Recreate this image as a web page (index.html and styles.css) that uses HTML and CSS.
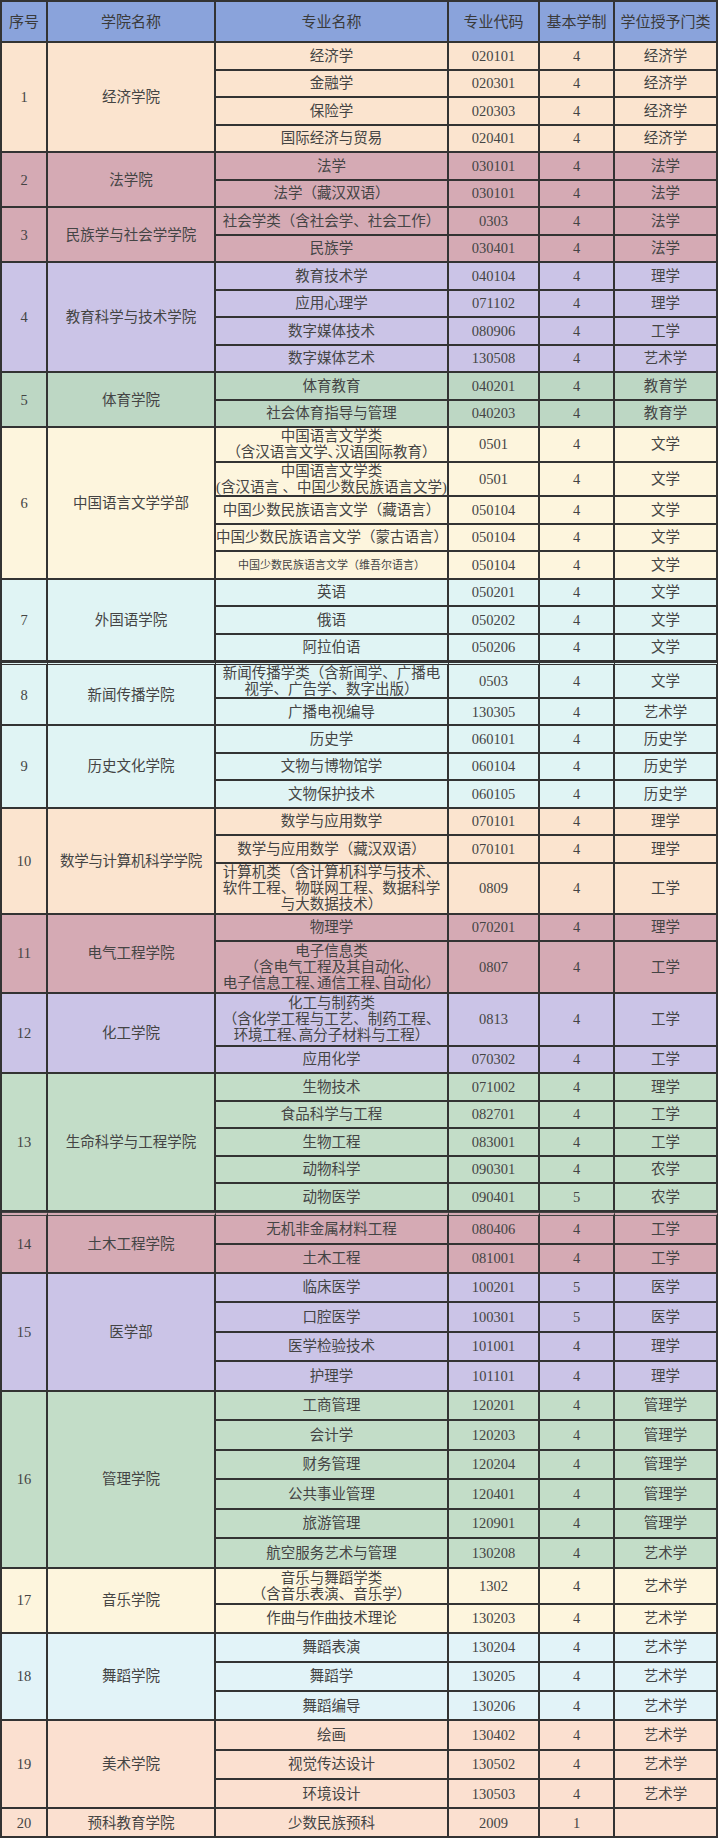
FILE: index.html
```html
<!DOCTYPE html>
<html lang="zh-CN">
<head>
<meta charset="utf-8">
<title>专业目录</title>
<link rel="stylesheet" href="styles.css">
</head>
<body>
<table class="majors">
  <colgroup>
    <col class="c-no"><col class="c-college"><col class="c-major"><col class="c-code"><col class="c-years"><col class="c-degree">
  </colgroup>
  <thead>
    <tr class="head">
      <th>序号</th><th>学院名称</th><th>专业名称</th><th>专业代码</th><th>基本学制</th><th>学位授予门类</th>
    </tr>
  </thead>
  <tbody class="peach">
    <tr class="r"><td rowspan="4">1</td><td rowspan="4">经济学院</td><td>经济学</td><td>020101</td><td>4</td><td>经济学</td></tr>
    <tr class="r"><td>金融学</td><td>020301</td><td>4</td><td>经济学</td></tr>
    <tr class="r"><td>保险学</td><td>020303</td><td>4</td><td>经济学</td></tr>
    <tr class="r"><td>国际经济与贸易</td><td>020401</td><td>4</td><td>经济学</td></tr>
  </tbody>
  <tbody class="pink">
    <tr class="r"><td rowspan="2">2</td><td rowspan="2">法学院</td><td>法学</td><td>030101</td><td>4</td><td>法学</td></tr>
    <tr class="r"><td>法学（藏汉双语）</td><td>030101</td><td>4</td><td>法学</td></tr>
    <tr class="r"><td rowspan="2">3</td><td rowspan="2">民族学与社会学学院</td><td>社会学类（含社会学、社会工作）</td><td>0303</td><td>4</td><td>法学</td></tr>
    <tr class="r"><td>民族学</td><td>030401</td><td>4</td><td>法学</td></tr>
  </tbody>
  <tbody class="lav">
    <tr class="r"><td rowspan="4">4</td><td rowspan="4">教育科学与技术学院</td><td>教育技术学</td><td>040104</td><td>4</td><td>理学</td></tr>
    <tr class="r"><td>应用心理学</td><td>071102</td><td>4</td><td>理学</td></tr>
    <tr class="r"><td>数字媒体技术</td><td>080906</td><td>4</td><td>工学</td></tr>
    <tr class="r"><td>数字媒体艺术</td><td>130508</td><td>4</td><td>艺术学</td></tr>
  </tbody>
  <tbody class="green1">
    <tr class="r"><td rowspan="2">5</td><td rowspan="2">体育学院</td><td>体育教育</td><td>040201</td><td>4</td><td>教育学</td></tr>
    <tr class="r"><td>社会体育指导与管理</td><td>040203</td><td>4</td><td>教育学</td></tr>
  </tbody>
  <tbody class="cream">
    <tr class="r2a"><td rowspan="5">6</td><td rowspan="5">中国语言文学学部</td><td class="ml">中国语言文学类<br>（含汉语言文学､汉语国际教育）</td><td>0501</td><td>4</td><td>文学</td></tr>
    <tr class="r2a"><td class="ml">中国语言文学类<br>(含汉语言 、中国少数民族语言文学)</td><td>0501</td><td>4</td><td>文学</td></tr>
    <tr class="r"><td>中国少数民族语言文学（藏语言）</td><td>050104</td><td>4</td><td>文学</td></tr>
    <tr class="r"><td>中国少数民族语言文学（蒙古语言）</td><td>050104</td><td>4</td><td>文学</td></tr>
    <tr class="r"><td class="small">中国少数民族语言文学（维吾尔语言）</td><td>050104</td><td>4</td><td>文学</td></tr>
  </tbody>
  <tbody class="cyan">
    <tr class="r"><td rowspan="3">7</td><td rowspan="3">外国语学院</td><td>英语</td><td>050201</td><td>4</td><td>文学</td></tr>
    <tr class="r"><td>俄语</td><td>050202</td><td>4</td><td>文学</td></tr>
    <tr class="r"><td>阿拉伯语</td><td>050206</td><td>4</td><td>文学</td></tr>
    <tr class="r2s sep"><td rowspan="2">8</td><td rowspan="2">新闻传播学院</td><td class="ml">新闻传播学类（含新闻学、广播电<br>视学、广告学、数字出版）</td><td>0503</td><td>4</td><td>文学</td></tr>
    <tr class="rs"><td>广播电视编导</td><td>130305</td><td>4</td><td>艺术学</td></tr>
    <tr class="r"><td rowspan="3">9</td><td rowspan="3">历史文化学院</td><td>历史学</td><td>060101</td><td>4</td><td>历史学</td></tr>
    <tr class="r"><td>文物与博物馆学</td><td>060104</td><td>4</td><td>历史学</td></tr>
    <tr class="r"><td>文物保护技术</td><td>060105</td><td>4</td><td>历史学</td></tr>
  </tbody>
  <tbody class="peach">
    <tr class="r"><td rowspan="3">10</td><td rowspan="3" class="tight">数学与计算机科学学院</td><td>数学与应用数学</td><td>070101</td><td>4</td><td>理学</td></tr>
    <tr class="r"><td>数学与应用数学（藏汉双语）</td><td>070101</td><td>4</td><td>理学</td></tr>
    <tr class="r3"><td class="ml">计算机类（含计算机科学与技术、<br>软件工程、物联网工程、数据科学<br>与大数据技术）</td><td>0809</td><td>4</td><td>工学</td></tr>
  </tbody>
  <tbody class="pink">
    <tr class="r"><td rowspan="2">11</td><td rowspan="2">电气工程学院</td><td>物理学</td><td>070201</td><td>4</td><td>理学</td></tr>
    <tr class="r3b"><td class="ml">电子信息类<br>（含电气工程及其自动化、<br>电子信息工程､通信工程､自动化）</td><td>0807</td><td>4</td><td>工学</td></tr>
  </tbody>
  <tbody class="lav">
    <tr class="r3c"><td rowspan="2">12</td><td rowspan="2">化工学院</td><td class="ml">化工与制药类<br>（含化学工程与工艺、制药工程、<br>环境工程､高分子材料与工程）</td><td>0813</td><td>4</td><td>工学</td></tr>
    <tr class="r"><td>应用化学</td><td>070302</td><td>4</td><td>工学</td></tr>
  </tbody>
  <tbody class="green2">
    <tr class="r"><td rowspan="5">13</td><td rowspan="5">生命科学与工程学院</td><td>生物技术</td><td>071002</td><td>4</td><td>理学</td></tr>
    <tr class="r"><td>食品科学与工程</td><td>082701</td><td>4</td><td>工学</td></tr>
    <tr class="r"><td>生物工程</td><td>083001</td><td>4</td><td>工学</td></tr>
    <tr class="r"><td>动物科学</td><td>090301</td><td>4</td><td>农学</td></tr>
    <tr class="r"><td>动物医学</td><td>090401</td><td>5</td><td>农学</td></tr>
  </tbody>
  <tbody class="pink">
    <tr class="rt sep2"><td rowspan="2">14</td><td rowspan="2">土木工程学院</td><td>无机非金属材料工程</td><td>080406</td><td>4</td><td>工学</td></tr>
    <tr class="rm"><td>土木工程</td><td>081001</td><td>4</td><td>工学</td></tr>
  </tbody>
  <tbody class="lav">
    <tr class="rl"><td rowspan="4">15</td><td rowspan="4">医学部</td><td>临床医学</td><td>100201</td><td>5</td><td>医学</td></tr>
    <tr class="rl"><td>口腔医学</td><td>100301</td><td>5</td><td>医学</td></tr>
    <tr class="rl"><td>医学检验技术</td><td>101001</td><td>4</td><td>理学</td></tr>
    <tr class="rl"><td>护理学</td><td>101101</td><td>4</td><td>理学</td></tr>
  </tbody>
  <tbody class="green2">
    <tr class="rl"><td rowspan="6">16</td><td rowspan="6">管理学院</td><td>工商管理</td><td>120201</td><td>4</td><td>管理学</td></tr>
    <tr class="rl"><td>会计学</td><td>120203</td><td>4</td><td>管理学</td></tr>
    <tr class="rl"><td>财务管理</td><td>120204</td><td>4</td><td>管理学</td></tr>
    <tr class="rl"><td>公共事业管理</td><td>120401</td><td>4</td><td>管理学</td></tr>
    <tr class="rl"><td>旅游管理</td><td>120901</td><td>4</td><td>管理学</td></tr>
    <tr class="rl"><td>航空服务艺术与管理</td><td>130208</td><td>4</td><td>艺术学</td></tr>
  </tbody>
  <tbody class="cream">
    <tr class="r2b"><td rowspan="2">17</td><td rowspan="2">音乐学院</td><td class="ml">音乐与舞蹈学类<br>（含音乐表演、音乐学）</td><td>1302</td><td>4</td><td>艺术学</td></tr>
    <tr class="rn"><td>作曲与作曲技术理论</td><td>130203</td><td>4</td><td>艺术学</td></tr>
  </tbody>
  <tbody class="blue">
    <tr class="rk"><td rowspan="3">18</td><td rowspan="3">舞蹈学院</td><td>舞蹈表演</td><td>130204</td><td>4</td><td>艺术学</td></tr>
    <tr class="rk"><td>舞蹈学</td><td>130205</td><td>4</td><td>艺术学</td></tr>
    <tr class="rk"><td>舞蹈编导</td><td>130206</td><td>4</td><td>艺术学</td></tr>
  </tbody>
  <tbody class="salmon">
    <tr class="rk"><td rowspan="3">19</td><td rowspan="3">美术学院</td><td>绘画</td><td>130402</td><td>4</td><td>艺术学</td></tr>
    <tr class="rk"><td>视觉传达设计</td><td>130502</td><td>4</td><td>艺术学</td></tr>
    <tr class="rk"><td>环境设计</td><td>130503</td><td>4</td><td>艺术学</td></tr>
    <tr class="rn"><td>20</td><td>预科教育学院</td><td>少数民族预科</td><td>2009</td><td>1</td><td></td></tr>
  </tbody>
</table>
</body>
</html>
```

FILE: styles.css
```css
html, body {
  margin: 0;
  padding: 0;
  background: #ffffff;
}

.majors {
  width: 718px;
  table-layout: fixed;
  border-collapse: separate;
  border-spacing: 0;
  border-top: 2px solid #333;
  border-left: 2px solid #333;
  font-family: "Liberation Serif", "Noto Sans CJK SC", serif;
  font-size: 14.5px;
  color: #444;
}

.c-no { width: 46px; }
.c-college { width: 168px; }
.c-major { width: 233px; }
.c-code { width: 91px; }
.c-years { width: 75px; }
.c-degree { width: 103px; }

.majors th,
.majors td {
  padding: 0;
  text-align: center;
  vertical-align: middle;
  border-right: 2px solid #333;
  border-bottom: 2px solid #333;
  line-height: 16px;
  font-weight: normal;
  white-space: nowrap;
  overflow: hidden;
}

.head { height: 41px; background: #8aa3db; }
.head th { font-size: 15px; color: #3a3a3a; }

.majors td.ml { line-height: 16px; }

.r { height: 27.5px; }
.r2a { height: 34.5px; }
.r2s { height: 37px; }
.rs { height: 27px; }
.r2b { height: 36px; }
.r3 { height: 51px; }
.r3b { height: 51.5px; }
.r3c { height: 53px; }
.rt { height: 33.5px; }
.rm { height: 28.5px; }
.rl { height: 29.5px; }
.rn { height: 29px; }
.rk { height: 29.33px; }

.sep td { border-top: 3px double #333; }
.sep2 td { border-top: 4px double #444; }

.small { font-size: 11px; }
.tight { letter-spacing: -0.3px; }

.peach { background: #fbe4cf; }
.pink { background: #d5aab4; }
.lav { background: #cbc4e7; }
.green1 { background: #bdd7c4; }
.green2 { background: #c3ddc8; }
.cream { background: #fdf5dd; }
.cyan { background: #e0f4f4; }
.blue { background: #e2f3f8; }
.salmon { background: #fbe0d0; }
```
